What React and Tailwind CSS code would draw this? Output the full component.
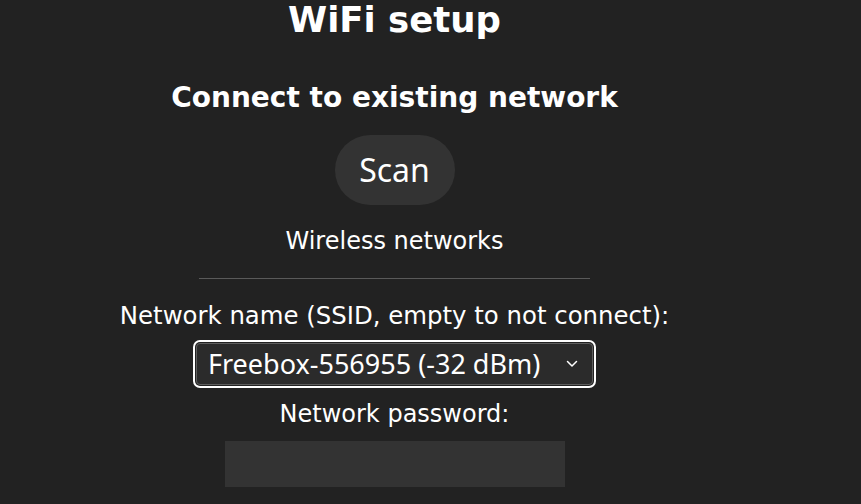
export default function App() {
  return (
    <div className="min-h-[504px] bg-[#222222] text-white font-['DejaVu_Sans',Verdana,sans-serif]">
      <div className="w-[789px] flex flex-col items-center">
        <h1 className="text-[35.5px] leading-[40px] font-bold">WiFi setup</h1>
        <h2 className="mt-[41px] text-[28px] leading-[34px] font-bold">Connect to existing network</h2>

        <button className="mt-[20px] w-[120px] h-[70px] rounded-full bg-[#333333] text-[32px] font-['Noto_Sans',sans-serif]">
          Scan
        </button>

        <p className="mt-[22px] text-[24px] leading-[28px]">Wireless networks</p>
        <hr className="mt-[23px] w-[391px] border-0 h-px bg-[#5a5a5a]" />

        <label className="mt-[23px] text-[24.4px] leading-[28px]">Network name (SSID, empty to not connect):</label>
        <div className="relative mt-[13px]">
          <select className="appearance-none w-[397px] h-[42px] pl-[11px] pr-10 rounded-[4px] bg-[#2b2b2b] border border-[#5e5e5e] ring-2 ring-white ring-offset-1 ring-offset-[#222222] text-[27px] text-white font-['Noto_Sans',sans-serif] outline-none">
            <option>Freebox-556955 (-32 dBm)</option>
          </select>
          <svg className="absolute right-[15px] top-1/2 -translate-y-1/2 pointer-events-none" width="12" height="8" viewBox="0 0 12 8" fill="none">
            <path d="M1.5 1.5 L6 6 L10.5 1.5" stroke="white" strokeWidth="1.5" strokeLinecap="round" strokeLinejoin="round" />
          </svg>
        </div>

        <label className="mt-[15px] text-[24px] leading-[28px]">Network password:</label>
        <input type="password" className="mt-[13px] w-[340px] h-[46px] bg-[#333333] outline-none" />
      </div>
    </div>
  );
}
